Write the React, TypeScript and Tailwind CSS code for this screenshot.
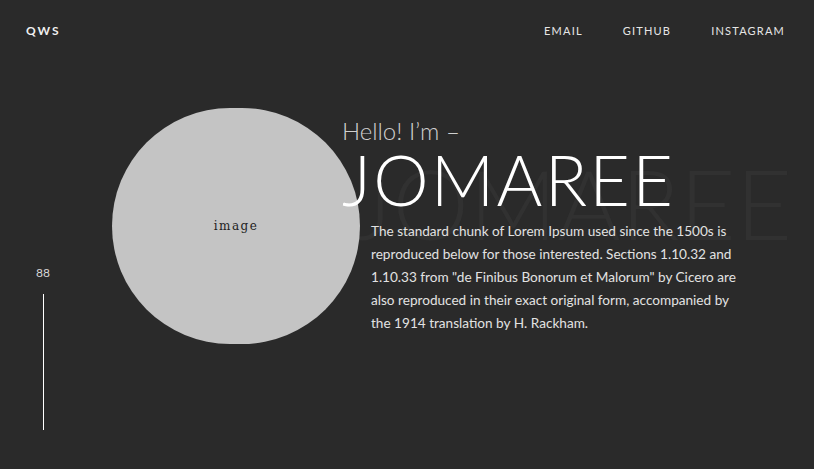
export default function App() {
  return (
    <div className="relative h-[469px] w-full overflow-hidden bg-[#2a2a2a] font-['Lato',sans-serif] text-white">
      {/* header */}
      <header className="flex items-center justify-between pl-[26px] pr-[29px] pt-[22px]">
        <div className="text-[12px] font-bold tracking-[2px] text-[#f0f0f0]">QWS</div>
        <nav className="flex gap-[40px] text-[11px] tracking-[1.2px] text-[#e6e6e6]">
          <a href="#">EMAIL</a>
          <a href="#">GITHUB</a>
          <a href="#">INSTAGRAM</a>
        </nav>
      </header>

      <main className="relative mt-[68px] flex items-start">
        {/* side counter */}
        <div className="ml-[35px] mt-[156px] flex w-[16px] flex-col items-center">
          <span className="text-[12px] text-[#d8d8d8]">88</span>
          <div className="mt-[12px] h-[136px] w-px bg-white" />
        </div>

        {/* picture */}
        <div className="relative z-[1] ml-[61px] flex h-[236px] w-[248px] shrink-0 items-center justify-center rounded-full bg-[#c4c4c4]">
          <span className="font-['DejaVu_Serif',serif] text-[12px] tracking-[1.5px] text-[#222]">image</span>
        </div>

        {/* intro */}
        <div className="relative -ml-[18px] mt-[11px]">
          {/* faded name behind the picture */}
          <div
            aria-hidden
            className="pointer-events-none absolute left-[10px] top-[35px] z-0 select-none whitespace-nowrap text-[97px] font-light leading-none text-[#313131]"
          >
            JOMAREE
          </div>
          <div className="relative z-[2]">
            <p className="text-[24px] font-light leading-none text-[#cfcfcf]">Hello! I’m –</p>
            <h1 className="mt-[1px] text-[70px] font-light leading-none tracking-[2.2px] text-white">JOMAREE</h1>
            <p className="ml-[29px] mt-[6px] w-[374px] text-[13.6px] leading-[23px] text-[#e2e2e2]">
              The standard chunk of Lorem Ipsum used since the 1500s is reproduced below for those interested. Sections 1.10.32 and 1.10.33 from "de Finibus Bonorum et Malorum" by Cicero are also reproduced in their exact original form, accompanied by the 1914 translation by H. Rackham.
            </p>
          </div>
        </div>
      </main>
    </div>
  );
}
